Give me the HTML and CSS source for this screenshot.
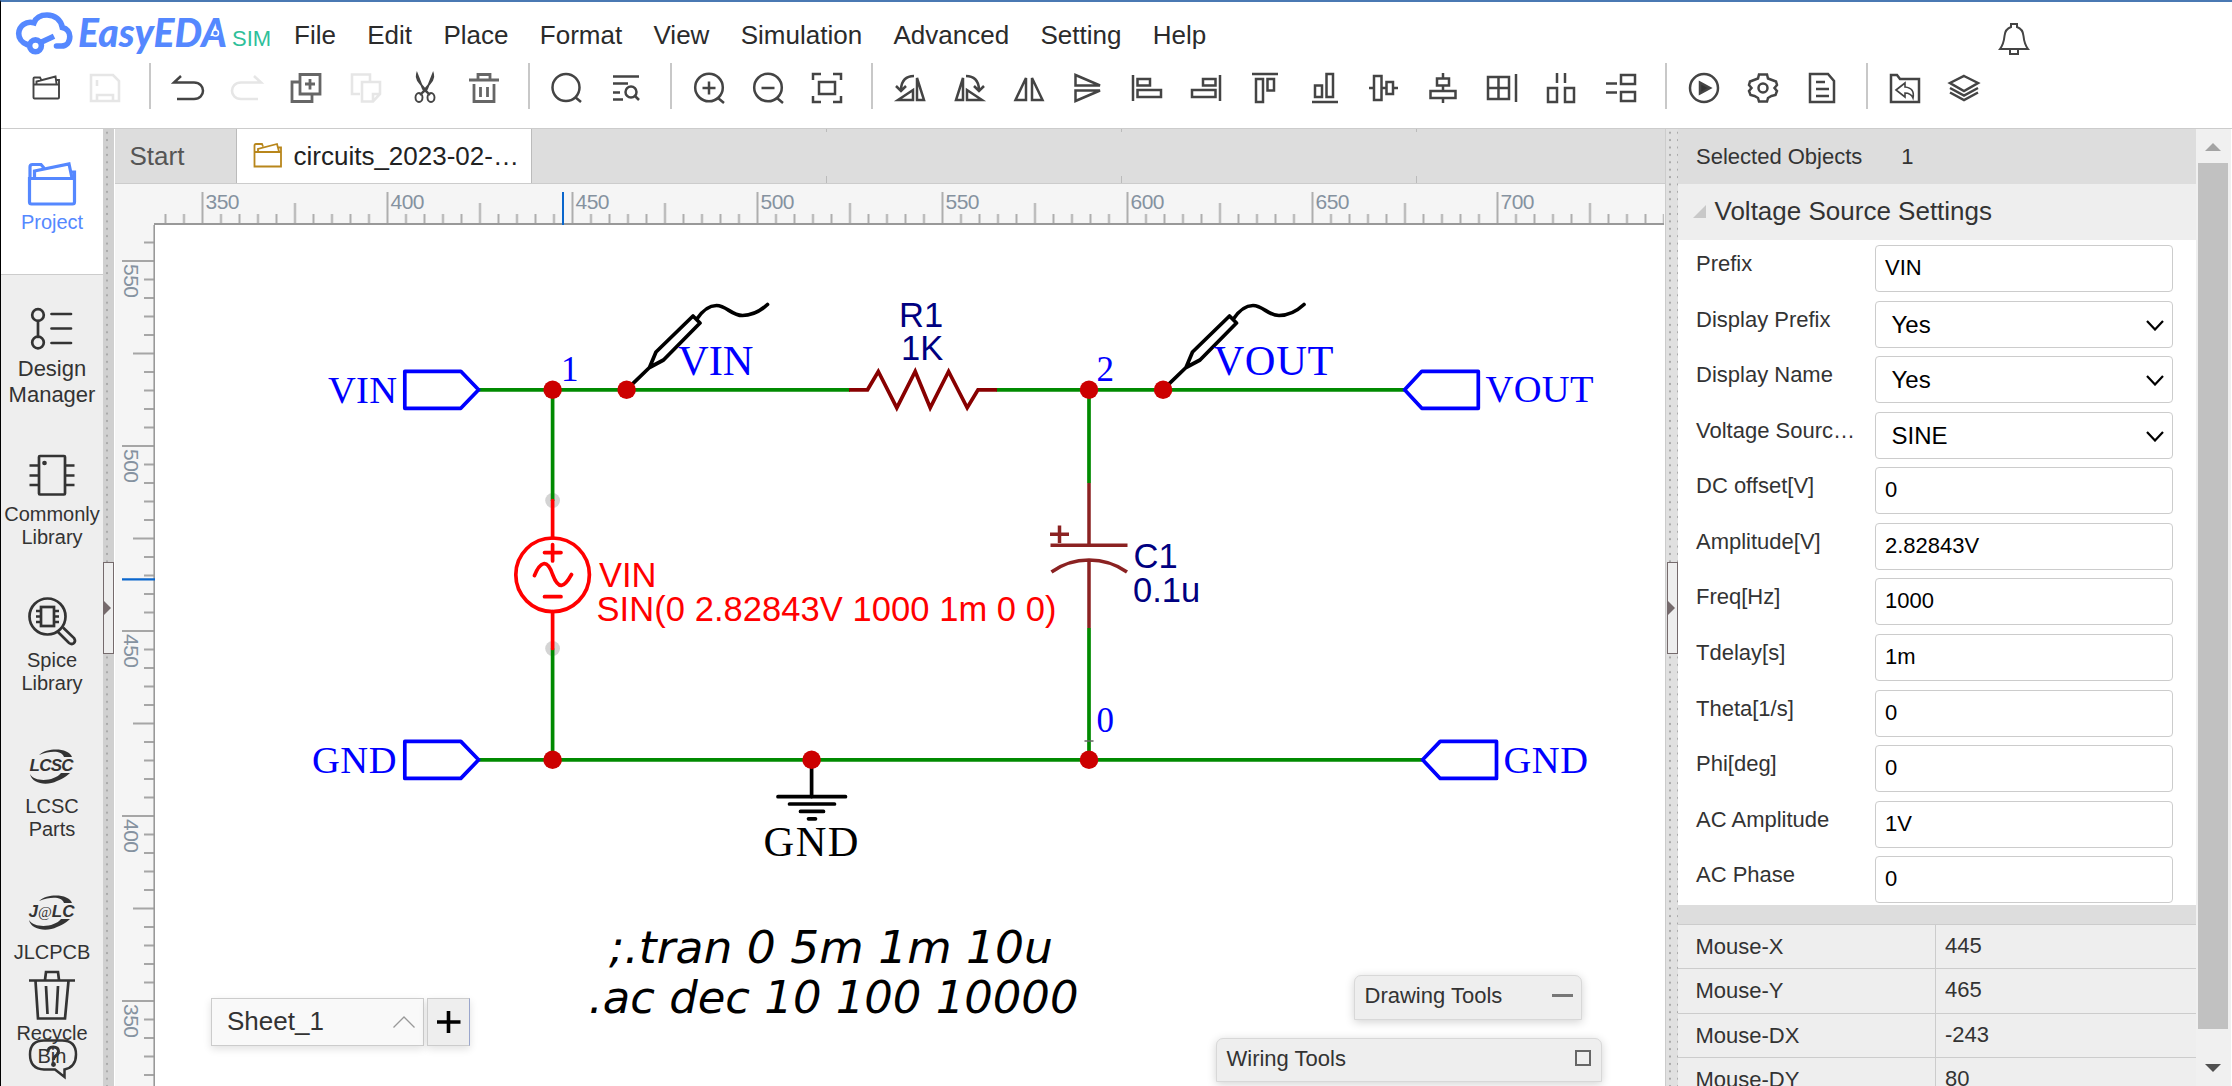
FILE: index.html
```html
<!DOCTYPE html>
<html lang="en">
<head>
<meta charset="utf-8">
<title>EasyEDA SIM</title>
<link rel="stylesheet" href="styles.css">
</head>
<body>
<div class="app">
  <header class="header">
    <div class="menubar">
      <svg class="logo" viewBox="10 8 266 50">
        <g fill="none" stroke="#5588ff" stroke-width="5.6" stroke-linecap="round">
          <path d="M27 44.500C21.500 42.500 18.700 38 18.700 33.500C19 26 26 20.500 34 22.800C36 17.500 41 15 47 15C55 15 61 20 62.300 27.500C67 28.500 69.800 32 69.800 36.500C69.800 42 66.500 46 61.500 46H56.500"/>
          <path d="M39.500 43L54 36.200" stroke-linecap="butt"/>
          <circle cx="35.500" cy="45.800" r="5.900"/>
        </g>
        <text class="brand" x="78" y="46.500" textLength="149" lengthAdjust="spacingAndGlyphs">EasyEDA</text>
        <circle cx="215.500" cy="33" r="3" fill="#5588ff" stroke="#fff" stroke-width="1.500"/>
        <text class="edition" x="232" y="45.700">SIM</text>
      </svg>
      <nav class="menu"><span>File</span><span>Edit</span><span>Place</span><span>Format</span><span>View</span><span>Simulation</span><span>Advanced</span><span>Setting</span><span>Help</span></nav>
      <svg class="bell" viewBox="-16 -16 32 32"><path d="M-14 10H14C11 6 10 2 9.500 -3C9 -9 6 -11 3 -12V-15H-3V-12C-6 -11 -9 -9 -9.500 -3C-10 2 -11 6 -14 10ZM-4 10.500V15H4V10.500"/></svg>
    </div>
    <div class="toolbar">
      <svg class="tool thin" viewBox="-16 -16 32 32"><path d="M-12.500 -3.500V9.500Q-12.500 10.500 -11.500 10.500H12Q13 10.500 13 9.500V-3.500ZM-12.500 -4V-9.500Q-12.500 -10.500 -11.500 -10.500H-6L-5 -8.500M-9.500 -4.500V-6.500L9.500 -11.500L10.500 -4.500M10.500 -8H13V-3.500"/></svg>
      <svg class="tool faded" viewBox="-16 -16 32 32"><path d="M-14 -13H8L14 -7V13H-14ZM-8 -8V-2M-8 13V7H8V13"/></svg>
      <i class="sep"></i>
      <svg class="tool" viewBox="-16 -16 32 32"><path d="M-7 -12L-14 -5.500H6C18 -5.500 18 11 6 11H-11"/></svg>
      <svg class="tool faded" viewBox="-16 -16 32 32"><path d="M7 -12L14 -5.500H-6C-18 -5.500 -18 11 -6 11H11"/></svg>
      <svg class="tool gray" viewBox="-16 -16 32 32"><path d="M-6 -13.500H14V6H-6ZM-6 -6H-14V13.500H6V6M4 -9V1.500M-1 -4H9"/></svg>
      <svg class="tool faded" viewBox="-16 -16 32 32"><path d="M-6 6H-14V-13.500H4V-6M-4 -6H14V6L7 13.500H-4ZM14 6H7V13.500"/></svg>
      <svg class="tool thin" viewBox="-16 -16 32 32"><path d="M-8 -14C-9.500 -9 -7 -7 5 7L-2 1ZM8 -14C9.500 -9 7 -7 -5 7L2 1Z"/><ellipse cx="-6" cy="9.500" rx="3.500" ry="4.500"/><ellipse cx="6" cy="9.500" rx="3.500" ry="4.500"/></svg>
      <svg class="tool gray" viewBox="-16 -16 32 32"><path d="M-15 -8H15M-6 -8V-13.500H6V-8M-10 -4V13.500H10V-4M-3.500 -1V9M3.500 -1V9"/></svg>
      <i class="sep"></i>
      <svg class="tool" viewBox="-16 -16 32 32"><circle cx="-1" cy="-.5" r="13.500"/><path d="M8 9L14 14"/></svg>
      <svg class="tool" viewBox="-16 -16 32 32"><path d="M-13 -11.500H13M-13 -4.500H2M-13 4.500H-6M-13 11.500H-3"/><circle cx="5" cy="4" r="5.500"/><path d="M9 8L13 12"/></svg>
      <i class="sep"></i>
      <svg class="tool" viewBox="-16 -16 32 32"><circle cx="0" cy="-.5" r="13.800"/><path d="M9 10L15 15M-6.500 0H6.500M0 -6.500V6.500"/></svg>
      <svg class="tool" viewBox="-16 -16 32 32"><circle cx="0" cy="-.5" r="13.800"/><path d="M9 10L15 15M-6.500 0H6.500"/></svg>
      <svg class="tool" viewBox="-16 -16 32 32"><path d="M-14 -8V-14H-6M6 -14H14V-8M14 8V14H6M-6 14H-14V8M-8 -6H8V6H-8Z"/></svg>
      <i class="sep"></i>
      <svg class="tool" viewBox="-16 -16 32 32"><path d="M-12 12H3V2ZM7 -10V12H14ZM4 -12Q-8 -12 -9 1M-14 -2L-9 3L-4 -2"/></svg>
      <svg class="tool" viewBox="-16 -16 32 32"><path d="M12 12H-3V2ZM-7 -10V12H-14ZM-4 -12Q8 -12 9 1M14 -2L9 3L4 -2"/></svg>
      <svg class="tool" viewBox="-16 -16 32 32"><path d="M-3 -10V12H-13.500ZM3 -10V12H13.500Z"/></svg>
      <svg class="tool" viewBox="-16 -16 32 32"><path d="M-12.500 -13L12 -2.500H-12.500ZM-12.500 13L12 2.500H-12.500Z"/></svg>
      <svg class="tool" viewBox="-16 -16 32 32"><path d="M-14 -13V13M-9.500 -9H3V-2.500H-9.500ZM-9.500 2H14V9H-9.500Z"/></svg>
      <svg class="tool" viewBox="-16 -16 32 32"><path d="M14 -13V13M9.500 -9H-3V-2.500H9.500ZM9.500 2H-14V9H9.500Z"/></svg>
      <svg class="tool" viewBox="-16 -16 32 32"><path d="M-13 -14H13M-9 -9H-2V14H-9ZM2.500 -9H9V2.500H2.500Z"/></svg>
      <svg class="tool" viewBox="-16 -16 32 32"><path d="M-13 14H13M-10 -2.500H-3V9H-10ZM1.500 -14H8V9H1.500Z"/></svg>
      <svg class="tool" viewBox="-16 -16 32 32"><path d="M-10 -12H-2.500V12H-10ZM2.500 -6H9V6H2.500ZM-15 0H-10M-2.500 0H2.500M9 0H14"/></svg>
      <svg class="tool" viewBox="-16 -16 32 32"><path d="M-6 -9.500H6V-2.500H-6ZM-12.500 3H12.500V10H-12.500ZM0 -15V-9.500M0 -2.500V3M0 10V15"/></svg>
      <svg class="tool" viewBox="-16 -16 32 32"><path d="M-14 -11H7V11H-14ZM-3.500 -11V11M-14 0H7M14 -14V14"/></svg>
      <svg class="tool" viewBox="-16 -16 32 32"><path d="M-4 -15V-5M4 -15V-5M-13 0H-4V14H-13ZM4 0H13V14H4Z"/></svg>
      <svg class="tool" viewBox="-16 -16 32 32"><path d="M-15 -4.500H-4M-15 4.500H-4M0 -13H14V-4H0ZM0 4H14V13H0Z"/></svg>
      <i class="sep"></i>
      <svg class="tool" viewBox="-16 -16 32 32"><circle r="14"/><path class="solid" d="M-4 -5.500L6 0L-4 5.500Z"/></svg>
      <svg class="tool" viewBox="-16 -16 32 32"><path d="M-4 -13.500H4L5 -9.500L9 -8L13 -6.500L14 -3L11.500 0L14 3L12.500 7L8.500 8L5 10L4 13.500H-4L-5 10L-8.500 8L-12.500 7L-14 3L-11.500 0L-14 -3L-13 -6.500L-9 -8L-5 -9.500Z"/><circle r="4.500"/></svg>
      <svg class="tool" viewBox="-16 -16 32 32"><path d="M-12 -14H6L12 -7V14H-12ZM-6 -6H3M-6 1H7M-6 8H7"/></svg>
      <i class="sep"></i>
      <svg class="tool" viewBox="-16 -16 32 32"><path d="M-14 -13H-8L-5 -9H14V14H-14Z"/><path class="fine" d="M-9 2L0 -5V-1Q10 0 8 10Q6 5 0 5V9Z"/></svg>
      <svg class="tool" viewBox="-16 -16 32 32"><path d="M0 -12L14 -5L0 3L-14 -5ZM-14 0L0 7.500L14 0M-14 4.500L0 12L14 4.500"/></svg>
    </div>
  </header>

  <main class="main">
    <aside class="sidebar">
      <div class="side-item active">
        <svg viewBox="0 0 50 50"><path d="M2.500 19.500H47.500V43Q47.500 45 45.500 45H4.500Q2.500 45 2.500 43ZM3 19V8Q3 5.500 5.500 5.500H14L17 9M7.500 19V12L42 5L45 19M43 13H47.500V19"/></svg>
        <span>Project</span>
      </div>
      <div class="side-item large">
        <svg viewBox="0 0 50 50"><circle cx="11" cy="10" r="5.800"/><circle cx="11" cy="37.500" r="5.800"/><path d="M11 16V32M24.500 9H44M24.500 23.500H44M24.500 38H44" stroke-linecap="round"/></svg>
        <span>Design<br>Manager</span>
      </div>
      <div class="side-item">
        <svg viewBox="0 0 50 50"><rect x="12" y="5" width="26" height="38.500" rx="1"/><path d="M2.500 14.500H11M2.500 24.500H11M2.500 34H11M39 14.500H47.500M39 24.500H47.500M39 34H47.500"/><circle class="solid" cx="17.500" cy="12" r="1"/></svg>
        <span>Commonly<br>Library</span>
      </div>
      <div class="side-item">
        <svg viewBox="0 0 50 50"><circle cx="20.500" cy="19.500" r="18"/><rect x="14" y="10" width="13" height="19"/><path d="M9 14H14M9 19.500H14M9 25H14M27 14H32M27 19.500H32M27 25H32M31 35L42 46Q45 48 47 46Q49 44 47 41L36 30.500"/></svg>
        <span>Spice<br>Library</span>
      </div>
      <div class="side-item">
        <svg viewBox="0 0 50 50"><path class="solid flat" d="M12 12C21 4 42 5 45 14H37C35 8 25 7 12 12ZM3 31C5 41 20 43 30 38C37 35 40 33 43 30H34C28 38 8 40 3 31Z"/><text class="mini" x="2.500" y="28" textLength="44">LCSC</text></svg>
        <span>LCSC<br>Parts</span>
      </div>
      <div class="side-item short">
        <svg viewBox="0 0 50 50"><path class="solid flat" d="M12 12C21 4 42 5 45 14H37C35 8 25 7 12 12ZM2 31C4 41 20 43 30 38C37 35 40 33 43 30H34C28 38 8 40 2 31Z"/><text class="mini" x="1.500" y="27.500" textLength="46" lengthAdjust="spacingAndGlyphs">J<tspan class="at">@</tspan>LC</text></svg>
        <span>JLCPCB</span>
      </div>
      <div class="side-item bin">
        <svg viewBox="0 0 50 50"><path d="M2 11.500H48M18 11L19 3H31L32 11M8.500 12L11 49.500H38L41.500 12M19 17L20.500 45M31 17L29.500 45"/></svg>
        <span>Recycle<br>Bin</span>
      </div>
      <svg class="help" viewBox="0 0 50 42"><path d="M2 16.500Q2 2.500 16 2.500H34Q48 2.500 48 16.500Q48 29 36.500 31.500V39L27 31.500H16Q2 31 2 16.500Z"/><path d="M20 14Q20 9 25 9Q30.500 9 30.500 13.500Q30.500 16 27.500 18Q25.500 19.500 25.500 22" stroke-width="3"/><circle class="solid" cx="25.500" cy="26.500" r="1.200"/></svg>
    </aside>
    <div class="splitter left"><b class="grip"></b></div>

    <section class="editor">
      <div class="tabs">
        <div class="tab start">Start</div>
        <div class="tab current">
          <svg viewBox="0 0 30 26"><path d="M1.500 10H28V24.500H1.500ZM1.500 10V3.500Q1.500 2 3 2H9L10 4.500M5 9.500V7L24 2L26 9.500M25 5.500H28V10"/></svg>
          <span>circuits_2023-02-…</span>
        </div>
        <div class="tab ghost"></div><div class="tab ghost"></div><div class="tab ghost"></div>
      </div>
      <svg class="ruler-h" viewBox="115 184 1550 41">
        <defs>
          <pattern id="ticksX" x="201.500" y="184" width="185" height="41" patternUnits="userSpaceOnUse">
            <path d="M1 8V40M93.500 19V40M19.500 30V40M38 30V40M56.500 30V40M75 30V40M112 30V40M130.500 30V40M149 30V40M167.500 30V40" stroke="#a6a6a6" stroke-width="1.800"/>
          </pattern>
        </defs>
        <rect x="158" y="184" width="1506" height="41" fill="url(#ticksX)"/>
        <path d="M154 224H1664" stroke="#999" stroke-width="1.800"/>
        <g class="nums"><text x="205.500" y="209" textLength="34">350</text><text x="390.500" y="209" textLength="34">400</text><text x="575.500" y="209" textLength="34">450</text><text x="760.500" y="209" textLength="34">500</text><text x="945.500" y="209" textLength="34">550</text><text x="1130.500" y="209" textLength="34">600</text><text x="1315.500" y="209" textLength="34">650</text><text x="1500.500" y="209" textLength="34">700</text></g>
        <path d="M563 192V225" stroke="#0a66cc" stroke-width="2"/>
      </svg>
      <div class="workspace">
        <svg class="ruler-v" viewBox="115 225 40 861">
          <defs>
            <pattern id="ticksY" x="115" y="260" width="40" height="185" patternUnits="userSpaceOnUse">
              <path d="M7 1H39M18 93.500H39M29 19.500H39M29 38H39M29 56.500H39M29 75H39M29 112H39M29 130.500H39M29 149H39M29 167.500H39" stroke="#a6a6a6" stroke-width="1.800"/>
            </pattern>
          </defs>
          <rect x="115" y="228" width="40" height="858" fill="url(#ticksY)"/>
          <path d="M154.200 225V1086" stroke="#999" stroke-width="1.600"/>
          <g class="nums"><text transform="translate(123.500 264) rotate(90)" textLength="34">550</text><text transform="translate(123.500 449) rotate(90)" textLength="34">500</text><text transform="translate(123.500 634) rotate(90)" textLength="34">450</text><text transform="translate(123.500 819) rotate(90)" textLength="34">400</text><text transform="translate(123.500 1004) rotate(90)" textLength="34">350</text></g>
          <path d="M122 579.300H155" stroke="#0a66cc" stroke-width="2.200"/>
        </svg>
        <svg class="schematic" viewBox="155 225 1510 861">
          <g class="pins"><circle cx="552.600" cy="500.500" r="7.400"/><circle cx="552.600" cy="648.500" r="7.400"/></g>
          <path class="wire" d="M478.600 389.800H850M996.500 389.800H1405M552.600 389.800V501M552.600 648.500V759.800M478.600 759.800H1423M1089 389.800V483M1089 628V759.800"/>
          <path class="port" d="M404.800 371.300H460.800L478.600 389.800L460.800 408.300H404.800ZM404.800 741.400H460.800L478.600 759.800L460.800 778.400H404.800ZM1404.600 389.800L1421.800 371.300H1478.300V408.300H1421.800ZM1422.600 759.800L1440.200 741.400H1496.500V778.400H1440.200Z"/>
          <path class="resistor" d="M849 389.800H867.500L878.300 371.500L896.800 407.800L915.200 371.500L930.200 407.800L948.600 371.500L967.200 407.800L978 389.800H997"/>
          <g class="cap"><path d="M1089 483V545M1089 560V628M1050.500 545.300H1127.500M1059.500 525.500V543M1050 534.300H1069M1051.500 572Q1068 560 1089 560Q1110 560 1127 572"/></g>
          <g class="source"><circle cx="552.600" cy="574.800" r="36.800"/><path d="M552.600 500.500V538M552.600 611.500V648.500M544.500 552.600H561M552.600 544.500V561M544.500 596.700H561M534.500 575.500C540 562 547 558 552.600 574.500C558.500 590 564 588 571.500 574.500"/></g>
          <g class="ground"><path d="M811.600 760V797M778 796.700H845.500M789.500 804H834.500M800.500 811.400H823.500M808.500 818.800H815.500"/></g>
          <path d="M1085 741H1093" stroke="#666" stroke-width="1.500"/>
          <g class="probe">
            <path d="M626.600 389.600L649.500 367.500L656 352L693 316L700 323L663.500 360L649.500 367.500M696.500 319.500C703.500 309 709.500 305.500 716.500 305.500C726.500 305.500 731.500 315.500 742.500 315.500C752.500 315.500 760.500 311 767.500 304.500"/>
            <path d="M1163.100 389.600L1186 367.500L1192.500 352L1229.500 316L1236.500 323L1200 360L1186 367.500M1233 319.500C1240 309 1246 305.500 1253 305.500C1263 305.500 1268 315.500 1279 315.500C1289 315.500 1297 311 1304 304.500"/>
          </g>
          <g class="nodes"><circle cx="552.600" cy="389.800" r="9.250"/><circle cx="626.600" cy="389.800" r="9.250"/><circle cx="1089" cy="389.800" r="9.250"/><circle cx="1163.100" cy="389.800" r="9.250"/><circle cx="552.600" cy="759.800" r="9.250"/><circle cx="811.600" cy="759.800" r="9.250"/><circle cx="1089" cy="759.800" r="9.250"/></g>
          <g class="net"><text x="328" y="402.800" textLength="69">VIN</text><text x="1485.500" y="402" textLength="108">VOUT</text><text x="312" y="773" textLength="84.500">GND</text><text x="1503.500" y="773" textLength="84.500">GND</text></g>
          <g class="net node-no"><text x="561" y="380.900">1</text><text x="1096.500" y="380.900">2</text><text x="1096.500" y="731.900">0</text></g>
          <g class="net probe-name"><text x="678" y="374.500" textLength="75.500">VIN</text><text x="1213.500" y="374.500" textLength="120">VOUT</text><text class="black" x="763.500" y="855.500" textLength="95">GND</text></g>
          <g class="part"><text x="899" y="326.700">R1</text><text x="901" y="359.700">1K</text><text x="1133.500" y="568.300">C1</text><text x="1133" y="601.700">0.1u</text></g>
          <g class="part red"><text x="599" y="587">VIN</text><text x="596.500" y="620.700" textLength="460">SIN(0 2.82843V 1000 1m 0 0)</text></g>
          <g class="spice"><text x="609" y="963.300" textLength="444" lengthAdjust="spacingAndGlyphs">;.tran 0 5m 1m 10u</text><text x="588.500" y="1012.700" textLength="490" lengthAdjust="spacingAndGlyphs">.ac dec 10 100 10000</text></g>
        </svg>

        <div class="sheets">
          <div class="sheet">Sheet_1<svg viewBox="0 0 22 12"><path d="M.5 11.500L11 1L21.500 11.500"/></svg></div>
          <div class="add-sheet"><svg viewBox="0 0 24 24"><path d="M0 12H23.500M11.500 1V23"/></svg></div>
        </div>
        <div class="palette drawing"><span>Drawing Tools</span><i class="minimize"></i></div>
        <div class="palette wiring"><span>Wiring Tools</span><i class="restore"></i></div>
      </div>
    </section>

    <div class="splitter right"><b class="grip"></b></div>
    <aside class="props">
      <div class="selected"><span>Selected Objects</span><span>1</span></div>
      <div class="section"><i class="fold"></i>Voltage Source Settings</div>
      <div class="fields">
        <div class="row"><label>Prefix</label><div class="field">VIN</div></div>
        <div class="row"><label>Display Prefix</label><div class="field select">Yes<svg viewBox="0 0 18 11"><path d="M1 1L9 9.500L17 1"/></svg></div></div>
        <div class="row"><label>Display Name</label><div class="field select">Yes<svg viewBox="0 0 18 11"><path d="M1 1L9 9.500L17 1"/></svg></div></div>
        <div class="row"><label>Voltage Sourc…</label><div class="field select">SINE<svg viewBox="0 0 18 11"><path d="M1 1L9 9.500L17 1"/></svg></div></div>
        <div class="row"><label>DC offset[V]</label><div class="field">0</div></div>
        <div class="row"><label>Amplitude[V]</label><div class="field">2.82843V</div></div>
        <div class="row"><label>Freq[Hz]</label><div class="field">1000</div></div>
        <div class="row"><label>Tdelay[s]</label><div class="field">1m</div></div>
        <div class="row"><label>Theta[1/s]</label><div class="field">0</div></div>
        <div class="row"><label>Phi[deg]</label><div class="field">0</div></div>
        <div class="row"><label>AC Amplitude</label><div class="field">1V</div></div>
        <div class="row"><label>AC Phase</label><div class="field">0</div></div>
      </div>
      <div class="mouse">
        <div class="pos"><span>Mouse-X</span><span>445</span></div>
        <div class="pos"><span>Mouse-Y</span><span>465</span></div>
        <div class="pos"><span>Mouse-DX</span><span>-243</span></div>
        <div class="pos"><span>Mouse-DY</span><span>80</span></div>
      </div>
    </aside>
    <div class="scrollbar"><i class="up"></i><b></b><i class="down"></i></div>
  </main>
</div>
</body>
</html>
```
FILE: styles.css
```css
* { box-sizing: border-box; }
body {
  margin: 0;
  width: 2232px;
  height: 1086px;
  overflow: hidden;
  background: #fff;
  color: #333;
  font-family: "Liberation Sans", Arial, sans-serif;
}
svg { display: block; flex: none; fill: none; }

.app {
  display: flex;
  flex-direction: column;
  height: 1086px;
  border-top: 2px solid #4a79b3;
  border-left: 1px solid #000;
}

/* header */
.header { flex: none; height: 127px; border-bottom: 1px solid #ccc; }
.menubar { display: flex; height: 60px; padding-left: 9px; }
.logo { width: 266px; height: 50px; margin-top: 6px; }
.brand { font: italic 900 40px Lato, sans-serif; fill: #5588ff; }
.edition { font-size: 22px; fill: #2fbf9a; }
.menu { display: flex; gap: 31.350px; margin-left: 18px; font-size: 26px; line-height: 30px; padding-top: 18px; color: #2b2b2b; }
.bell { width: 32px; height: 32px; margin: 20.500px 202px 0 auto; stroke: #444; stroke-width: 2; }
.toolbar { display: flex; align-items: center; height: 46px; margin-top: 1px; padding-left: 15.200px; }
.tool { position: relative; top: 1.500px; width: 32px; height: 32px; margin: 0 13.600px; stroke: #444; stroke-width: 2.500; overflow: visible; }
.tool.thin { stroke-width: 1.900; }
.tool.gray { stroke: #666; stroke-width: 2.800; }
.tool.faded { stroke: #e6e6e6; stroke-width: 2.600; }
.tool .fine { stroke-width: 1.600; }
.solid { fill: #333; }
.sep { flex: none; width: 2px; height: 46px; margin: 0 7.400px 0 14.400px; background: #c8c8c8; }

.main { display: flex; flex: 1; min-height: 0; }

/* left navigation */
.sidebar { position: relative; flex: none; width: 102px; background: #eee; overflow: hidden; }
.side-item { display: flex; flex-direction: column; align-items: center; height: 146px; padding-top: 29.500px; font-size: 20px; line-height: 23px; text-align: center; }
.side-item svg { width: 50px; height: 50px; margin-bottom: 2px; stroke: #333; stroke-width: 2.700; overflow: visible; }
.side-item.active { background: #fff; color: #5588ff; border-bottom: 1px solid #ccc; }
.side-item.active svg { stroke: #5588ff; stroke-width: 3.200; }
.side-item.large { font-size: 22px; line-height: 26px; }
.side-item.large svg { margin-bottom: 1px; }
.side-item.short { height: 110px; }
.side-item.bin { padding-top: 0; }
.side-item.bin svg { margin-bottom: 3px; }
.side-item .flat, .side-item .mini { stroke: none; }
.mini { font: italic bold 17px "Liberation Sans", sans-serif; fill: #333; }
.mini .at { font: 15px "Liberation Serif", serif; }
.help { position: absolute; left: 26.500px; top: 908.500px; width: 50px; height: 42px; stroke: #333; stroke-width: 2.500; }

.splitter {
  position: relative;
  flex: none;
  width: 12px;
  background: radial-gradient(circle, #aaa 1.100px, transparent 1.500px) 0 0 / 8px 7.400px, #d0d0d0;
  border-right: 1px solid #fff;
}
.splitter.right { width: 13px; border-right: 0; border-left: 1px solid #ccc; background-color: #e0e0e0; }
.grip { position: absolute; left: 0; top: 433px; width: 11px; height: 92px; border: 1px solid #756a6c; background: #eee; }
.splitter.right .grip { left: 1px; }
.grip::after { content: ""; position: absolute; left: 0; top: 38px; border: 7px solid transparent; border-left-color: #756a6c; border-right: 0; }

/* editor */
.editor { flex: none; width: 1550px; display: flex; flex-direction: column; background: #fff; }
.tabs { flex: none; display: flex; height: 55px; background: #ddd; border-bottom: 1px solid #ccc; font-size: 26px; line-height: 54px; }
.tab { flex: none; }
.tab.start { width: 121px; padding-left: 14.500px; color: #555; }
.tab.current { display: flex; align-items: center; width: 296px; padding-left: 16px; gap: 10.500px; background: #fff; border: solid #bbb; border-width: 0 1px; color: #222; }
.tab.current svg { width: 30px; height: 26px; margin-top: -3px; stroke: #b8861b; stroke-width: 1.800; }
.ghost { width: 295px; background: linear-gradient(#bbb, #bbb) right top / 1px 3px no-repeat, linear-gradient(#bbb, #bbb) right bottom / 1px 7px no-repeat; }
.ruler-h { width: 1550px; height: 41px; background: #f5f5f5; }
.nums { font-size: 21px; fill: #8592a0; }
.workspace { position: relative; display: flex; flex: 1; min-height: 0; }
.ruler-v { width: 40px; height: 861px; background: #f5f5f5; }
.schematic { width: 1510px; height: 861px; stroke-width: 3.700; stroke-linecap: round; }

/* schematic parts */
.wire { stroke: #008a00; stroke-linecap: butt; }
.port { stroke: #0000ff; stroke-linejoin: round; }
.resistor { stroke: #880000; stroke-linecap: butt; }
.cap { stroke: #8b2222; stroke-linecap: butt; stroke-width: 3.500; }
.source { stroke: #ff0000; }
.ground, .probe { stroke: #000; }
.probe { stroke-linejoin: round; }
.pins { fill: #d4d4d4; }
.nodes { fill: #cc0000; }
.net { font: 38.500px "Liberation Serif", serif; fill: #0000ff; }
.node-no { font-size: 35px; }
.probe-name { font-size: 42.500px; }
.black { fill: #000; }
.part { font-size: 34.500px; fill: #000080; }
.part.red { fill: #ff0000; }
.spice { font: italic 45px "DejaVu Sans", sans-serif; fill: #000; }

/* floating widgets over the canvas */
.sheets { position: absolute; left: 96px; top: 773px; display: flex; gap: 3px; height: 48px; }
.sheet, .add-sheet { display: flex; align-items: center; border: 1px solid #ccc; box-shadow: 0 3px 8px rgba(0,0,0,.12); }
.sheet { width: 213px; padding: 0 8px 2px 15px; justify-content: space-between; background: #f9f9f9; font-size: 26px; line-height: 30px; }
.sheet svg { width: 22px; height: 12px; margin-top: 1px; stroke: #999; stroke-width: 1.300; }
.add-sheet { width: 43px; padding: 0 0 1px 9px; background: #eee; border-right-color: #9aa6cc; }
.add-sheet svg { width: 24px; height: 24px; stroke: #000; stroke-width: 3.600; }
.palette { position: absolute; display: flex; justify-content: space-between; padding: 6.500px 8px 0 9.500px; background: #eee; border: 1px solid #d8d8d8; border-radius: 7px 7px 0 0; box-shadow: 0 2px 10px rgba(0,0,0,.18); font-size: 22px; line-height: 26px; }
.drawing { left: 1239px; top: 750px; width: 228px; height: 45px; }
.wiring { left: 1101px; top: 813px; width: 386px; height: 44px; }
.minimize { width: 21px; height: 3px; margin-top: 11.500px; background: #777; }
.restore { width: 16px; height: 16px; margin: 4.500px 2px 0 0; border: 2px solid #666; }

/* properties */
.props { flex: none; width: 518px; background: #ddd; font-size: 22px; overflow: hidden; }
.selected { display: flex; height: 55px; padding-left: 18px; gap: 39px; line-height: 55px; }
.section { display: flex; height: 56px; padding: 0 0 1px 14.500px; gap: 9px; align-items: center; background: #eee; font-size: 26px; }
.fold { border-left: 13px solid transparent; border-bottom: 13px solid #c8c8c8; }
.fields { height: 665px; overflow: hidden; background: #fff; }
.row { display: flex; height: 55.570px; padding: 5px 23px 0 18px; }
.row label { width: 179px; padding-top: 4px; line-height: 30px; white-space: nowrap; }
.field { flex: 1; display: flex; justify-content: space-between; height: 47px; padding: 0 8px 0 9px; border: 1px solid #ccc; border-radius: 4px; color: #000; line-height: 44px; }
.field.select { padding-left: 15.500px; font-size: 24px; line-height: 45px; }
.field svg { width: 18px; height: 11px; margin-top: 18px; stroke: #000; stroke-width: 2.200; }
.mouse { margin-top: 19px; background: #eee; }
.pos { display: flex; height: 44.400px; border-top: 1px solid #ccc; line-height: 43px; white-space: nowrap; }
.pos span:first-child { width: 258px; padding-left: 17.500px; border-right: 1px solid #ccc; }
.pos span:last-child { padding-left: 9px; line-height: 41px; }

.scrollbar { flex: none; display: flex; flex-direction: column; align-items: center; width: 35px; padding: 14px 1px 0 0; background: #f0f0f0; }
.scrollbar b { width: 30px; height: 866px; background: #c1c1c1; }
.scrollbar .up { border: 8px solid transparent; border-top: 0; border-bottom-color: #a3a3a3; margin-bottom: 12px; }
.scrollbar .down { border: 8px solid transparent; border-bottom: 0; border-top-color: #505050; margin-top: 35px; }
```
